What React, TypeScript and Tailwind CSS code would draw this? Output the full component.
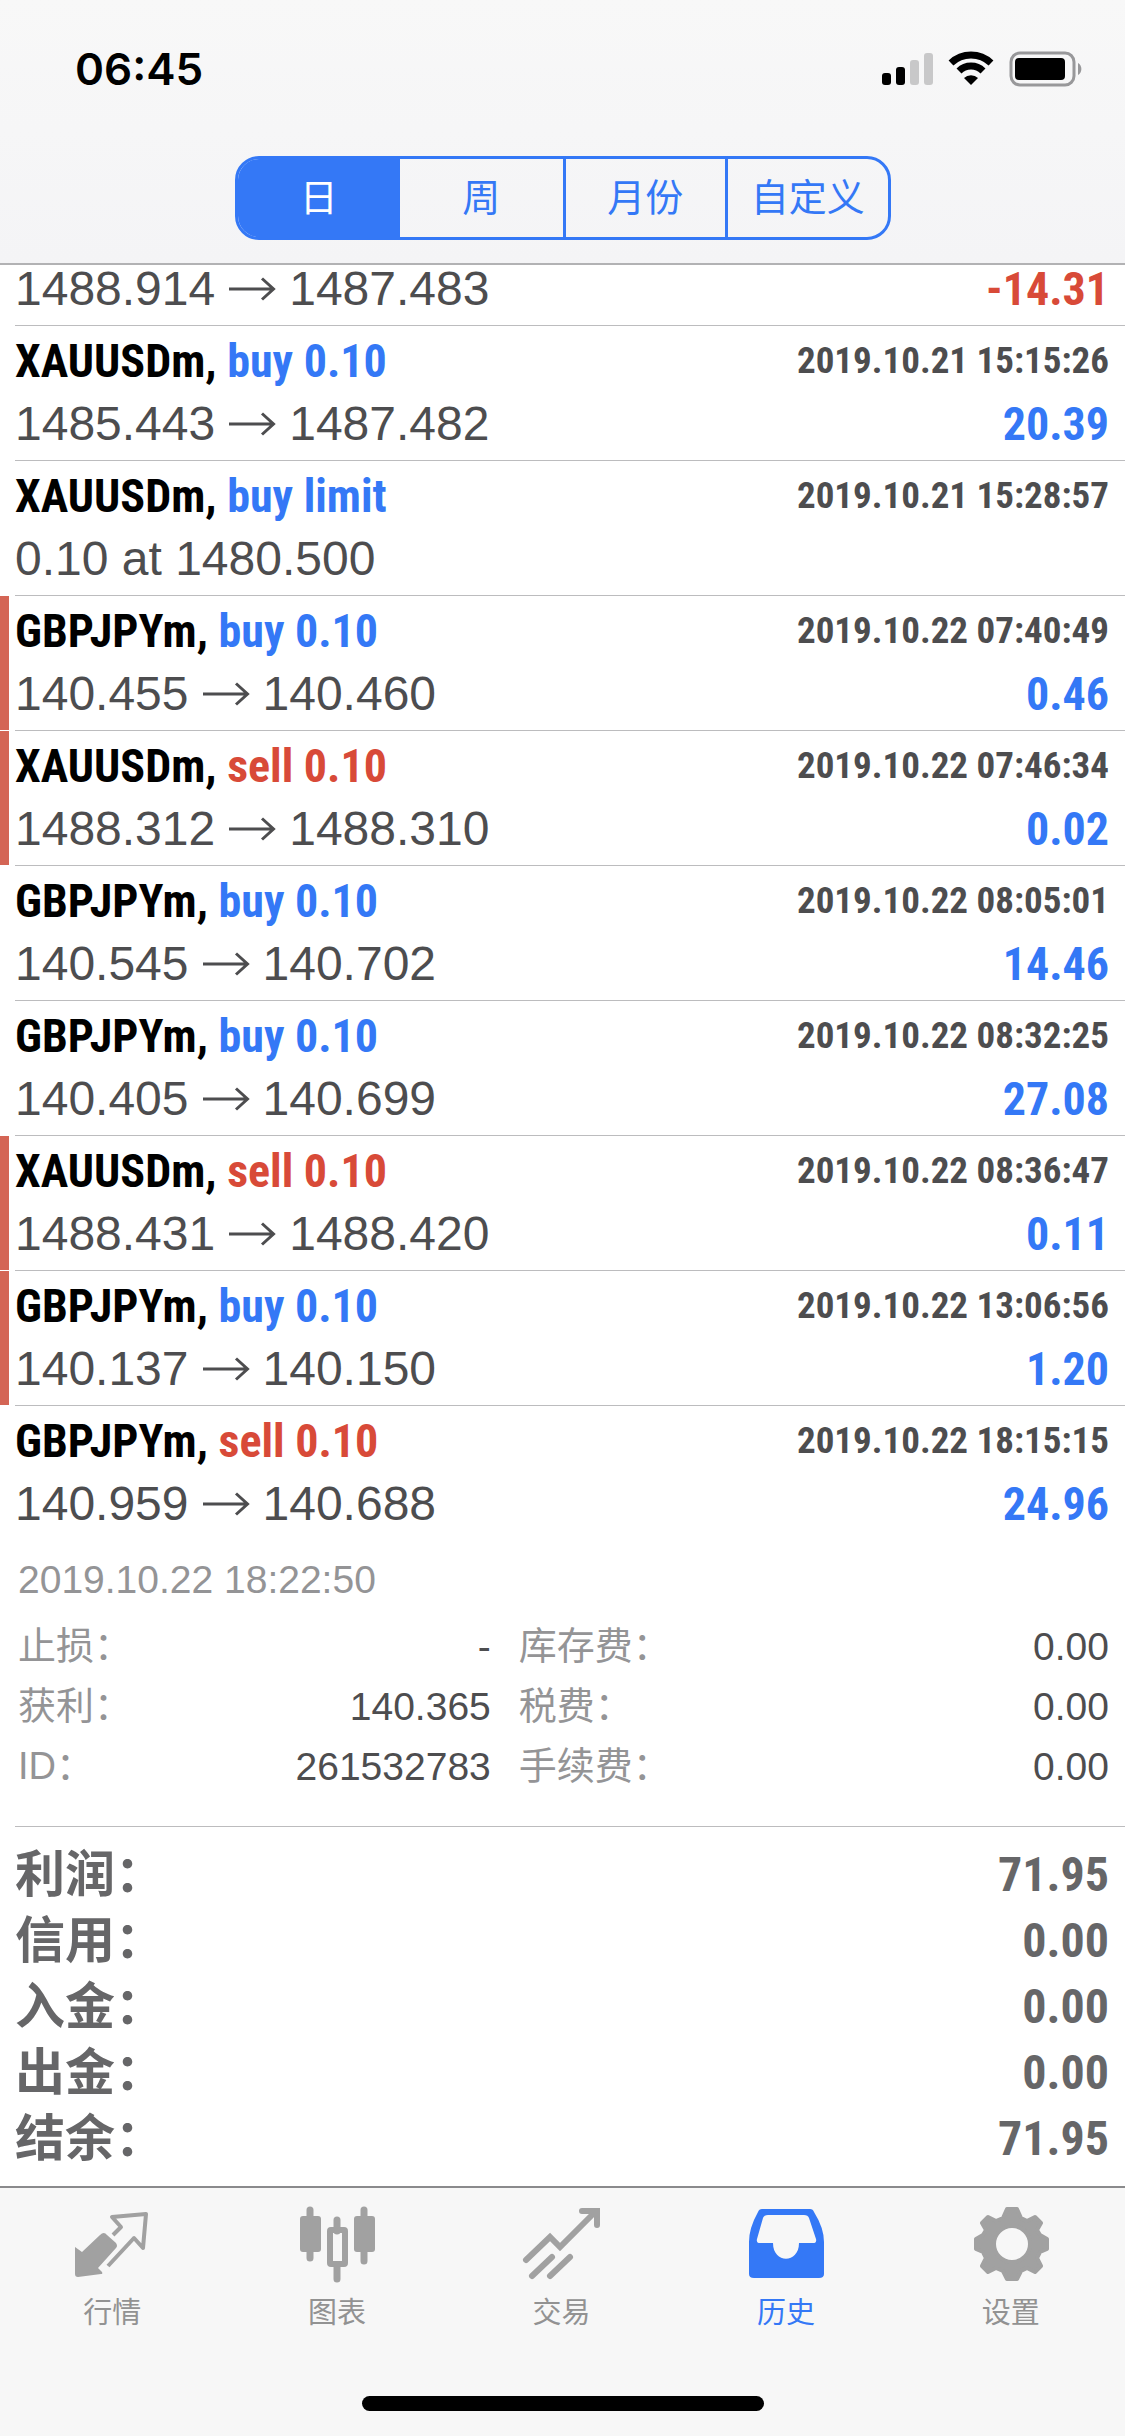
import type { ReactNode } from 'react'

type Deal = {
  symbol?: string
  side?: 'buy' | 'sell'
  volume?: string
  time?: string
  open: string
  close?: string
  profit?: string
  closedByStop?: boolean
}

const PERIODS = ['日', '周', '月份', '自定义']

const DEALS: Deal[] = [
  { symbol: 'XAUUSDm', side: 'buy', volume: '0.10', time: '2019.10.21 15:15:26', open: '1485.443', close: '1487.482', profit: '20.39' },
  { symbol: 'XAUUSDm', side: 'buy', volume: 'limit', time: '2019.10.21 15:28:57', open: '0.10 at 1480.500' },
  { symbol: 'GBPJPYm', side: 'buy', volume: '0.10', time: '2019.10.22 07:40:49', open: '140.455', close: '140.460', profit: '0.46', closedByStop: true },
  { symbol: 'XAUUSDm', side: 'sell', volume: '0.10', time: '2019.10.22 07:46:34', open: '1488.312', close: '1488.310', profit: '0.02', closedByStop: true },
  { symbol: 'GBPJPYm', side: 'buy', volume: '0.10', time: '2019.10.22 08:05:01', open: '140.545', close: '140.702', profit: '14.46' },
  { symbol: 'GBPJPYm', side: 'buy', volume: '0.10', time: '2019.10.22 08:32:25', open: '140.405', close: '140.699', profit: '27.08' },
  { symbol: 'XAUUSDm', side: 'sell', volume: '0.10', time: '2019.10.22 08:36:47', open: '1488.431', close: '1488.420', profit: '0.11', closedByStop: true },
  { symbol: 'GBPJPYm', side: 'buy', volume: '0.10', time: '2019.10.22 13:06:56', open: '140.137', close: '140.150', profit: '1.20', closedByStop: true },
  { symbol: 'GBPJPYm', side: 'sell', volume: '0.10', time: '2019.10.22 18:15:15', open: '140.959', close: '140.688', profit: '24.96' },
]

const DETAILS = [
  ['止损', '-', '库存费', '0.00'],
  ['获利', '140.365', '税费', '0.00'],
  ['ID', '261532783', '手续费', '0.00'],
]

const TOTALS = [
  ['利润', '71.95'],
  ['信用', '0.00'],
  ['入金', '0.00'],
  ['出金', '0.00'],
  ['结余', '71.95'],
]

function StatusBar() {
  return (
    <div className="flex h-[132px] items-center justify-between pt-[6px] pr-[43px] pl-[75px]">
      <span className="font-['Inter',sans-serif] text-[44px] font-semibold text-black">06:45</span>
      <svg width="200" height="36" viewBox="0 0 200 36" aria-hidden="true">
        <rect x="0" y="22" width="9" height="12" rx="3" />
        <rect x="14" y="16" width="9" height="18" rx="3" />
        <rect x="28" y="9" width="9" height="25" rx="3" fill="#c8c8c9" />
        <rect x="42" y="2" width="9" height="32" rx="3" fill="#c8c8c9" />
        <path d="M89 34l-7-7a10 10 0 0 1 14 0z" />
        <path d="M77 20a17 17 0 0 1 24 0" fill="none" stroke="#000" strokeWidth="7" />
        <path d="M69 12a29 29 0 0 1 40 0" fill="none" stroke="#000" strokeWidth="7" />
        <rect x="129" y="2" width="63" height="32" rx="9" fill="none" stroke="#98989a" strokeWidth="3" />
        <rect x="133" y="7" width="50" height="22" rx="4" />
        <path d="M196 12a7 7 0 0 1 0 12z" fill="#98989a" />
      </svg>
    </div>
  )
}

function PeriodSwitch() {
  return (
    <div className="mx-auto mt-[24px] flex h-[84px] w-[656px] max-w-full overflow-hidden rounded-[24px] border-[3px] border-[#3478f6]">
      {PERIODS.map((label, i) => (
        <button
          key={label}
          type="button"
          aria-pressed={i === 0}
          className={`basis-1/4 border-[#3478f6] text-[38px] ${i === 0 ? 'bg-[#3478f6] text-white' : 'text-[#3478f6]'} ${i > 1 ? 'border-l-[3px]' : ''}`}
        >
          {label}
        </button>
      ))}
    </div>
  )
}

function Arrow() {
  return (
    <svg className="mx-[13px] inline-block" width="48" height="24" viewBox="0 0 48 24" fill="none" stroke="#4d4d4f" strokeWidth="3" aria-label="to">
      <path d="M1 12H45M34 1.500L45.500 12L34 22.500" />
    </svg>
  )
}

function Prices({ deal }: { deal: Deal }) {
  return (
    <div className="flex h-[60px] shrink-0 items-center justify-between leading-none">
      <div className="flex items-center text-[48px] text-[#4d4d4f]">
        <span>{deal.open}</span>
        {deal.close && (
          <>
            <Arrow />
            <span>{deal.close}</span>
          </>
        )}
      </div>
      {deal.profit && (
        <span
          className={`font-['Roboto_Condensed','Liberation_Sans',sans-serif] text-[46px] font-bold ${deal.profit.startsWith('-') ? 'text-[#d84a38]' : 'text-[#3478f6]'}`}
        >
          {deal.profit}
        </span>
      )}
    </div>
  )
}

function DealRow({ deal, last }: { deal: Deal; last?: boolean }) {
  return (
    <li className="flex h-[135px]">
      <div className={`mr-[6px] w-[9px] ${deal.closedByStop ? 'mb-px bg-[#d46555]' : ''}`} />
      <div className={`flex-1 pt-[4px] pr-[16px] ${last ? '' : 'border-b border-[#bcbcbe]'}`}>
        <div className="flex h-[64px] items-center justify-between pb-[2px] font-['Roboto_Condensed','Liberation_Sans',sans-serif] font-bold">
          <h2 className="text-[46px] text-black">
            {deal.symbol},{' '}
            <span className={deal.side === 'buy' ? 'text-[#3478f6]' : 'text-[#d84a38]'}>
              {deal.side} {deal.volume}
            </span>
          </h2>
          <time className="text-[37px] text-[#4d4d4f]">{deal.time}</time>
        </div>
        <Prices deal={deal} />
      </div>
    </li>
  )
}

function DealDetails() {
  return (
    <div className="ml-[15px] h-[286px] border-b border-[#bcbcbe] pr-[16px] pl-[3px] text-[39px] text-[#949496]">
      <p className="h-[76px] leading-[78px]">2019.10.22 18:22:50</p>
      {DETAILS.map(([left, leftValue, right, rightValue]) => (
        <dl key={left} className="grid h-[60px] grid-cols-[13fr_17fr] items-center">
          <div className="flex justify-between">
            <dt className="text-[38px]">{left}：</dt>
            <dd className="text-[#4d4d4f]">{leftValue}</dd>
          </div>
          <div className="flex justify-between pl-[28px]">
            <dt className="text-[38px]">{right}：</dt>
            <dd className="text-[#4d4d4f]">{rightValue}</dd>
          </div>
        </dl>
      ))}
    </div>
  )
}

function Totals() {
  return (
    <dl className="pt-[15px] pr-[16px] pl-[15px] font-bold text-[#666668]">
      {TOTALS.map(([label, value]) => (
        <div key={label} className="flex h-[66px] items-center justify-between">
          <dt className="text-[50px]">{label}：</dt>
          <dd className="font-['Roboto_Condensed','Liberation_Sans',sans-serif] text-[48px]">{value}</dd>
        </div>
      ))}
    </dl>
  )
}

function Tab({ label, active, children }: { label: string; active?: boolean; children: ReactNode }) {
  return (
    <a
      href="#"
      aria-current={active ? 'page' : undefined}
      className={`flex flex-1 flex-col items-center text-[29px] ${active ? 'text-[#3478f6]' : 'text-[#929292]'}`}
    >
      <svg className={active ? '' : 'text-[#a1a1a1]'} width="80" height="80" viewBox="0 0 80 80" fill="currentColor" aria-hidden="true">
        {children}
      </svg>
      <span className="mt-[8px] leading-[42px]">{label}</span>
    </a>
  )
}

function TabBar() {
  return (
    <nav className="mt-auto h-[250px] border-t-2 border-[#8a8a8c] bg-[#f7f7f7] pt-[16px]">
      <div className="flex pr-[2px]">
        <Tab label="行情">
          <path d="M3 43L10 48L28 31Q32 27 35 31L44 39Q46 42 44 44L26 64L30 68Q31 70 29 70L6 73Q3 73 3 70Z" />
          <path d="M41 31L49 23L40 13L74 10L71 44L62 34L36 62" fill="none" stroke="currentColor" strokeWidth="4" strokeLinejoin="round" />
        </Tab>
        <Tab label="图表">
          <rect x="3" y="12" width="21" height="36" rx="3" />
          <rect x="57" y="12" width="21" height="36" rx="3" />
          <path d="M13 6V54M67 6V57M40 16V27M40 63V75" stroke="currentColor" strokeWidth="7" strokeLinecap="round" />
          <rect x="33" y="26" width="15" height="34" rx="1" fill="none" stroke="currentColor" strokeWidth="6" />
        </Tab>
        <Tab label="交易">
          <path d="M5 56L29 33L39 43L73 9M61 7H76V21M11 72L31 53M29 72L49 53" fill="none" stroke="currentColor" strokeWidth="6" strokeLinecap="round" />
        </Tab>
        <Tab label="历史" active>
          <path fillRule="evenodd" d="M16 5H64Q67 5 68 8Q78 24 78 38V70Q78 74 73 74H8Q3 74 3 70V38Q3 24 12 8Q13 5 16 5ZM22 11Q18 11 17 14L11 35Q10 39 14 39H27C27 60 53 60 53 39H67Q71 39 70 35L63 14Q62 11 58 11Z" />
        </Tab>
        <Tab label="设置">
          <path
            fillRule="evenodd"
            stroke="currentColor"
            strokeWidth="4"
            strokeLinejoin="round"
            d="M36 5H46L50 14L56 17L64 13L70 19L66 26L69 31L76 35V45L69 48L66 54L70 62L64 68L56 64L50 67L46 75H36L32 67L25 64L17 68L11 62L15 54L12 48L5 45V35L12 31L15 26L11 19L17 13L25 17L32 14ZM41 22A18 18 0 1 0 41 58A18 18 0 1 0 41 22Z"
          />
        </Tab>
      </div>
      <div className="mx-auto mt-[62px] h-[15px] w-[402px] rounded-full bg-black" />
    </nav>
  )
}

export default function App() {
  return (
    <div className="flex min-h-screen flex-col bg-white font-['Liberation_Sans','Noto_Sans_CJK_SC',sans-serif]">
      <header className="h-[265px] border-b-2 border-[#b2b2b4] bg-linear-to-b from-[#f8f8f8] to-[#f4f4f6]">
        <StatusBar />
        <PeriodSwitch />
      </header>
      <main>
        <div className="ml-[15px] flex h-[61px] flex-col justify-end border-b border-[#bcbcbe] pr-[16px] pb-[6px]">
          <Prices deal={{ open: '1488.914', close: '1487.483', profit: '-14.31' }} />
        </div>
        <ul>
          {DEALS.map((deal, i) => (
            <DealRow key={deal.time} deal={deal} last={i === DEALS.length - 1} />
          ))}
        </ul>
        <DealDetails />
        <Totals />
      </main>
      <TabBar />
    </div>
  )
}
